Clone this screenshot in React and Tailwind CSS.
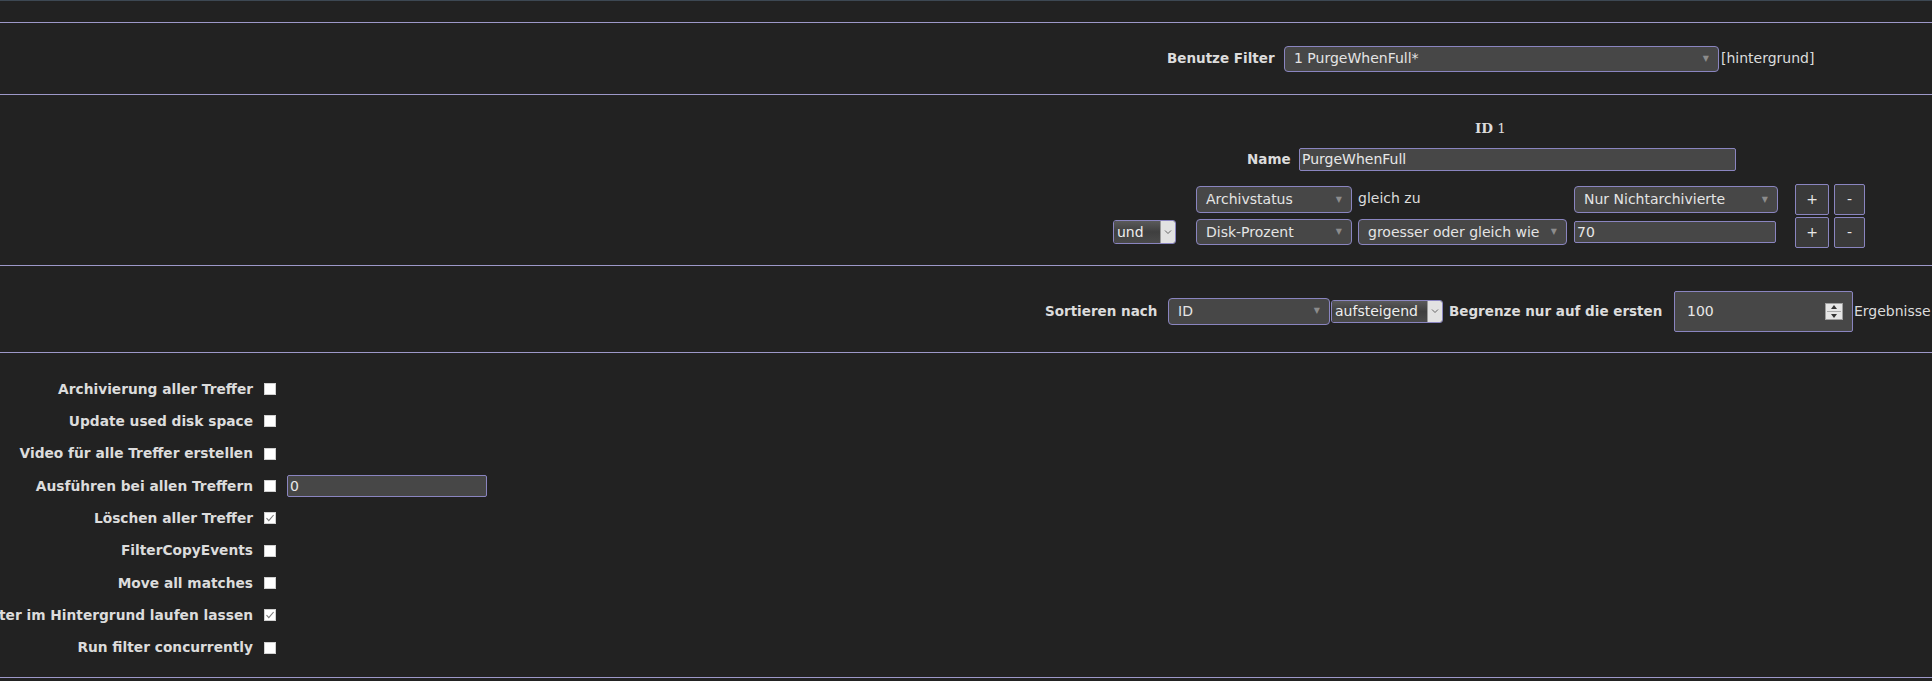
import React from 'react';

const font = "font-['DejaVu_Sans','Verdana',sans-serif]";

// select box with small triangle on the right
const Select = ({ value, w, h = 'h-[27px]' }) => (
  <div className={`${w} ${h} flex items-center justify-between rounded-[4px] border border-[#8a85c0] bg-[#474747] pl-[9px] pr-[9px] text-[14px] text-[#e4e4e4]`}>
    <span className="whitespace-nowrap">{value}</span>
    <span className="text-[8px] text-[#8c8c8c]">▼</span>
  </div>
);

// native-looking select with a light drop button
const NativeSelect = ({ value, w, h }) => (
  <div className={`${w} ${h} flex rounded-[3px] border border-[#8a85c0] overflow-hidden`}>
    <div className="flex-1 flex items-center pl-[3px] text-[14px] text-[#eeeeee] bg-gradient-to-b from-[#5a5a5a] via-[#3f3f3f] to-[#4a4a4a] whitespace-nowrap">{value}</div>
    <div className="w-[15px] flex items-center justify-center bg-[#e2e2e2] border-l border-[#9a9a9a]">
      <svg width="8" height="6" viewBox="0 0 8 6"><path d="M1 1.5 L4 4.5 L7 1.5" fill="none" stroke="#666" strokeWidth="1" /></svg>
    </div>
  </div>
);

const TextInput = ({ value, w, h }) => (
  <div className={`${w} ${h} flex items-center rounded-[2px] border border-[#8a85c0] bg-[#474747] pl-[2px] text-[14px] text-[#e8e8e8]`}>
    {value}
  </div>
);

const SmallButton = ({ label, w }) => (
  <div className={`${w} h-[31px] flex items-center justify-center rounded-[2px] border border-[#8a85c0] bg-[#3a3a3a] text-[14px] text-[#e8e8e8]`}>
    {label}
  </div>
);

const Checkbox = ({ checked }) => (
  <div className="w-[12px] h-[12px] bg-white border border-[#cfcfcf] flex items-center justify-center">
    {checked && (
      <svg width="10" height="10" viewBox="0 0 10 10"><path d="M1.5 5.2 L3.8 7.6 L8.6 2" fill="none" stroke="#7a7a7a" strokeWidth="1.1" /></svg>
    )}
  </div>
);

const options = [
  { label: 'Archivierung aller Treffer' },
  { label: 'Update used disk space' },
  { label: 'Video für alle Treffer erstellen' },
  { label: 'Ausführen bei allen Treffern', input: '0' },
  { label: 'Löschen aller Treffer', checked: true },
  { label: 'FilterCopyEvents' },
  { label: 'Move all matches' },
  { label: 'Filter im Hintergrund laufen lassen', checked: true },
  { label: 'Run filter concurrently' },
];

export default function App() {
  return (
    <div className={`w-[1932px] h-[681px] bg-[#222222] border-t border-[#3d4853] overflow-hidden ${font} text-[#e2e2e2]`}>
      <div className="h-[22px] border-b border-[#9d98c9]" />

      {/* Benutze Filter */}
      <div className="h-[72px] border-b border-[#9d98c9] flex items-center pl-[1167px]">
        <span className="w-[117px] font-bold text-[13.5px] text-[#dcdcdc] whitespace-nowrap">Benutze Filter</span>
        <Select value="1 PurgeWhenFull*" w="w-[435px]" h="h-[26px]" />
        <span className="ml-[2px] text-[14px] text-[#dcdcdc]">[hintergrund]</span>
      </div>

      {/* Filter terms */}
      <div className="h-[171px] border-b border-[#9d98c9] flex flex-col">
        <div className="pt-[24px] pl-[1475px] font-['DejaVu_Serif',serif] text-[13.5px] text-[#dcdcdc] leading-[18px]">
          <span className="font-bold">ID</span> 1
        </div>
        <div className="mt-[11px] flex items-center pl-[1247px]">
          <span className="w-[52px] font-bold text-[13.5px] text-[#dcdcdc]">Name</span>
          <TextInput value="PurgeWhenFull" w="w-[437px]" h="h-[23px]" />
        </div>
        <div className="mt-[13px] pl-[1113px] grid grid-cols-[83px_162px_216px_221px_39px_31px] items-center h-[31px]">
          <div />
          <Select value="Archivstatus" w="w-[156px]" />
          <span className="text-[14px] text-[#dcdcdc] -mt-[3px]">gleich zu</span>
          <Select value="Nur Nichtarchivierte" w="w-[204px]" />
          <SmallButton label="+" w="w-[34px]" />
          <SmallButton label="-" w="w-[31px]" />
        </div>
        <div className="mt-[1px] pl-[1113px] grid grid-cols-[83px_162px_216px_221px_39px_31px] items-center h-[32px]">
          <NativeSelect value="und" w="w-[63px]" h="h-[24px]" />
          <Select value="Disk-Prozent" w="w-[156px]" h="h-[26px]" />
          <Select value="groesser oder gleich wie" w="w-[209px]" h="h-[26px]" />
          <TextInput value="70" w="w-[202px]" h="h-[22px]" />
          <SmallButton label="+" w="w-[34px]" />
          <SmallButton label="-" w="w-[31px]" />
        </div>
      </div>

      {/* Sorting */}
      <div className="h-[87px] border-b border-[#9d98c9] flex items-center pt-[4px] pl-[1045px] whitespace-nowrap">
        <span className="w-[123px] font-bold text-[13.5px] text-[#dcdcdc]">Sortieren nach</span>
        <Select value="ID" w="w-[162px]" />
        <div className="ml-[1px]">
          <NativeSelect value="aufsteigend" w="w-[112px]" h="h-[23px]" />
        </div>
        <span className="ml-[6px] w-[225px] font-bold text-[13.5px] text-[#dcdcdc]">Begrenze nur auf die ersten</span>
        <div className="w-[179px] h-[41px] flex items-center justify-between rounded-[2px] border border-[#8a85c0] bg-[#474747] pl-[12px] pr-[9px] text-[14px] text-[#e8e8e8]">
          <span>100</span>
          <div className="w-[18px] h-[17px] bg-[#e6e6e6] border border-[#a0a0a0] flex flex-col items-center justify-center gap-[2px]">
            <svg width="6" height="4" viewBox="0 0 6 4"><path d="M0 4 L3 0 L6 4 Z" fill="#333" /></svg>
            <div className="w-[14px] h-px bg-[#aaaaaa]" />
            <svg width="6" height="4" viewBox="0 0 6 4"><path d="M0 0 L3 4 L6 0 Z" fill="#333" /></svg>
          </div>
        </div>
        <span className="ml-[1px] text-[14px] text-[#dcdcdc]">Ergebnisse</span>
      </div>

      {/* Actions */}
      <div className="h-[325px] border-b border-[#9d98c9] pt-[20px]">
        {options.map((o) => (
          <div key={o.label} className="h-[32.3px] flex items-center">
            <div className="w-[253px] flex justify-end whitespace-nowrap font-bold text-[13.75px] text-[#dcdcdc]">
              <span>{o.label}</span>
            </div>
            <div className="ml-[11px]">
              <Checkbox checked={o.checked} />
            </div>
            {o.input !== undefined && (
              <div className="ml-[11px]">
                <TextInput value={o.input} w="w-[200px]" h="h-[22px]" />
              </div>
            )}
          </div>
        ))}
      </div>
    </div>
  );
}
